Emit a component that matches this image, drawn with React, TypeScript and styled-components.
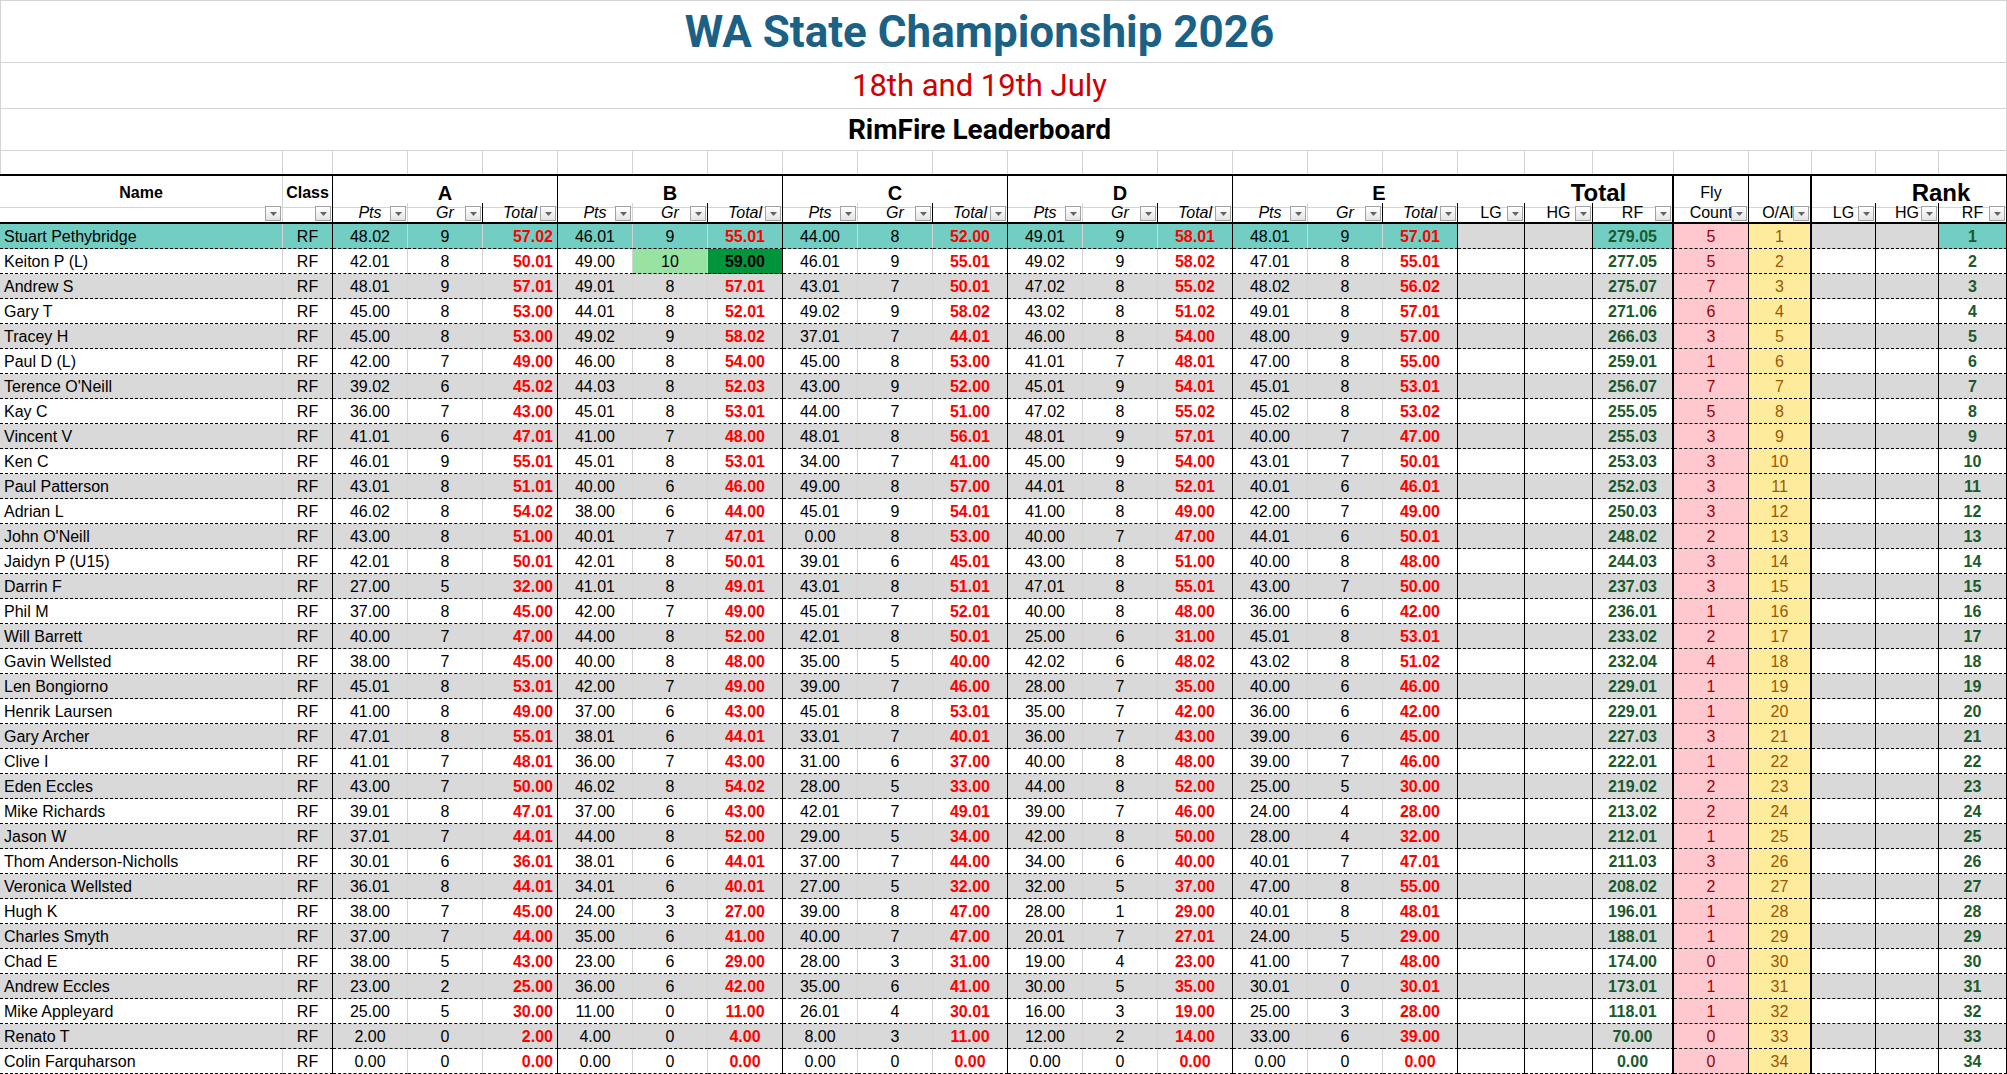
import React from 'react';
import styled, { createGlobalStyle } from 'styled-components';

type Line = 'g' | 'b' | 't' | 'n';
type Align = 'left' | 'center' | 'right';

const GRID = '#d4d4d4';
const TEAL = '#72cdc2';
const STRIPE = '#d9d9d9';
const WHITE = '#ffffff';
const PINK = '#ffc7ce';
const YELLOW = '#ffeb9c';
const RED = '#ff0000';
const GREEN_TEXT = '#1b5a2c';

const LINES: Record<Line, string> = {
	g: `1px solid ${GRID}`,
	b: '1px solid #000',
	t: '2px solid #000',
	n: '0 none',
};

interface Col {
	w: number;
	data: Line;
	filter: Line;
	label: string;
	italic?: boolean;
}

const stageCols = (): Col[] => [
	{ w: 75, data: 'g', filter: 'g', label: 'Pts', italic: true },
	{ w: 75, data: 'g', filter: 'b', label: 'Gr', italic: true },
	{ w: 75, data: 'b', filter: 'b', label: 'Total', italic: true },
];

const COLUMNS: Col[] = [
	{ w: 283, data: 'g', filter: 'g', label: '' },
	{ w: 50, data: 'b', filter: 'b', label: '' },
	...stageCols(),
	...stageCols(),
	...stageCols(),
	...stageCols(),
	...stageCols(),
	{ w: 67, data: 'b', filter: 'b', label: 'LG' },
	{ w: 68, data: 'b', filter: 'b', label: 'HG' },
	{ w: 81, data: 't', filter: 't', label: 'RF' },
	{ w: 75, data: 'b', filter: 'b', label: 'Count' },
	{ w: 63, data: 't', filter: 't', label: 'O/All' },
	{ w: 64, data: 'b', filter: 'b', label: 'LG' },
	{ w: 63, data: 'b', filter: 'b', label: 'HG' },
	{ w: 68, data: 'b', filter: 'b', label: 'RF' },
];

const TEMPLATE = COLUMNS.map((c) => `${c.w}px`).join(' ');

// name | A | B | C | D | E | total | fly count  (rank = position)
const RESULTS = [
	'Stuart Pethybridge|48.02 9 57.02|46.01 9 55.01|44.00 8 52.00|49.01 9 58.01|48.01 9 57.01|279.05|5',
	'Keiton P (L)|42.01 8 50.01|49.00 10 59.00|46.01 9 55.01|49.02 9 58.02|47.01 8 55.01|277.05|5',
	'Andrew S|48.01 9 57.01|49.01 8 57.01|43.01 7 50.01|47.02 8 55.02|48.02 8 56.02|275.07|7',
	'Gary T|45.00 8 53.00|44.01 8 52.01|49.02 9 58.02|43.02 8 51.02|49.01 8 57.01|271.06|6',
	'Tracey H|45.00 8 53.00|49.02 9 58.02|37.01 7 44.01|46.00 8 54.00|48.00 9 57.00|266.03|3',
	'Paul D (L)|42.00 7 49.00|46.00 8 54.00|45.00 8 53.00|41.01 7 48.01|47.00 8 55.00|259.01|1',
	"Terence O'Neill|39.02 6 45.02|44.03 8 52.03|43.00 9 52.00|45.01 9 54.01|45.01 8 53.01|256.07|7",
	'Kay C|36.00 7 43.00|45.01 8 53.01|44.00 7 51.00|47.02 8 55.02|45.02 8 53.02|255.05|5',
	'Vincent V|41.01 6 47.01|41.00 7 48.00|48.01 8 56.01|48.01 9 57.01|40.00 7 47.00|255.03|3',
	'Ken C|46.01 9 55.01|45.01 8 53.01|34.00 7 41.00|45.00 9 54.00|43.01 7 50.01|253.03|3',
	'Paul Patterson|43.01 8 51.01|40.00 6 46.00|49.00 8 57.00|44.01 8 52.01|40.01 6 46.01|252.03|3',
	'Adrian L|46.02 8 54.02|38.00 6 44.00|45.01 9 54.01|41.00 8 49.00|42.00 7 49.00|250.03|3',
	"John O'Neill|43.00 8 51.00|40.01 7 47.01|0.00 8 53.00|40.00 7 47.00|44.01 6 50.01|248.02|2",
	'Jaidyn P (U15)|42.01 8 50.01|42.01 8 50.01|39.01 6 45.01|43.00 8 51.00|40.00 8 48.00|244.03|3',
	'Darrin F|27.00 5 32.00|41.01 8 49.01|43.01 8 51.01|47.01 8 55.01|43.00 7 50.00|237.03|3',
	'Phil M|37.00 8 45.00|42.00 7 49.00|45.01 7 52.01|40.00 8 48.00|36.00 6 42.00|236.01|1',
	'Will Barrett|40.00 7 47.00|44.00 8 52.00|42.01 8 50.01|25.00 6 31.00|45.01 8 53.01|233.02|2',
	'Gavin Wellsted|38.00 7 45.00|40.00 8 48.00|35.00 5 40.00|42.02 6 48.02|43.02 8 51.02|232.04|4',
	'Len Bongiorno|45.01 8 53.01|42.00 7 49.00|39.00 7 46.00|28.00 7 35.00|40.00 6 46.00|229.01|1',
	'Henrik Laursen|41.00 8 49.00|37.00 6 43.00|45.01 8 53.01|35.00 7 42.00|36.00 6 42.00|229.01|1',
	'Gary Archer|47.01 8 55.01|38.01 6 44.01|33.01 7 40.01|36.00 7 43.00|39.00 6 45.00|227.03|3',
	'Clive I|41.01 7 48.01|36.00 7 43.00|31.00 6 37.00|40.00 8 48.00|39.00 7 46.00|222.01|1',
	'Eden Eccles|43.00 7 50.00|46.02 8 54.02|28.00 5 33.00|44.00 8 52.00|25.00 5 30.00|219.02|2',
	'Mike Richards|39.01 8 47.01|37.00 6 43.00|42.01 7 49.01|39.00 7 46.00|24.00 4 28.00|213.02|2',
	'Jason W|37.01 7 44.01|44.00 8 52.00|29.00 5 34.00|42.00 8 50.00|28.00 4 32.00|212.01|1',
	'Thom Anderson-Nicholls|30.01 6 36.01|38.01 6 44.01|37.00 7 44.00|34.00 6 40.00|40.01 7 47.01|211.03|3',
	'Veronica Wellsted|36.01 8 44.01|34.01 6 40.01|27.00 5 32.00|32.00 5 37.00|47.00 8 55.00|208.02|2',
	'Hugh K|38.00 7 45.00|24.00 3 27.00|39.00 8 47.00|28.00 1 29.00|40.01 8 48.01|196.01|1',
	'Charles Smyth|37.00 7 44.00|35.00 6 41.00|40.00 7 47.00|20.01 7 27.01|24.00 5 29.00|188.01|1',
	'Chad E|38.00 5 43.00|23.00 6 29.00|28.00 3 31.00|19.00 4 23.00|41.00 7 48.00|174.00|0',
	'Andrew Eccles|23.00 2 25.00|36.00 6 42.00|35.00 6 41.00|30.00 5 35.00|30.01 0 30.01|173.01|1',
	'Mike Appleyard|25.00 5 30.00|11.00 0 11.00|26.01 4 30.01|16.00 3 19.00|25.00 3 28.00|118.01|1',
	'Renato T|2.00 0 2.00|4.00 0 4.00|8.00 3 11.00|12.00 2 14.00|33.00 6 39.00|70.00|0',
	'Colin Farquharson|0.00 0 0.00|0.00 0 0.00|0.00 0 0.00|0.00 0 0.00|0.00 0 0.00|0.00|0',
];

const GlobalStyle = createGlobalStyle`
	html, body {
		margin: 0;
		padding: 0;
		background: #fff;
		overflow: hidden;
	}

	body {
		font-family: 'Liberation Sans', Arial, sans-serif;
		color: #000;
	}

	* {
		box-sizing: border-box;
	}
`;

const Sheet = styled.main`
	width: 2007px;
`;

const Banner = styled.header`
	display: flex;
	flex-direction: column;
	border-top: 1px solid ${GRID};
`;

const BannerRow = styled.div<{ $h: number }>`
	height: ${(p) => p.$h}px;
	display: flex;
	align-items: center;
	justify-content: center;
	padding-right: 48px;
	border-left: 1px solid ${GRID};
	border-right: 1px solid ${GRID};
	border-bottom: 1px solid ${GRID};
	font-family: Roboto, 'Liberation Sans', sans-serif;
	white-space: nowrap;
`;

const Title = styled.h1`
	margin: 0;
	font-size: 44px;
	font-weight: 700;
	color: #1b6185;
`;

const Dates = styled.div`
	font-size: 31px;
	color: #d00000;
`;

const Subtitle = styled.h2`
	margin: 0;
	font-size: 28px;
	font-weight: 700;
`;

const GridRow = styled.div<{ $h: number }>`
	display: grid;
	grid-template-columns: ${TEMPLATE};
	height: ${(p) => p.$h}px;
`;

const BlankCell = styled.div`
	border-right: 1px solid ${GRID};

	&:first-child {
		border-left: 1px solid ${GRID};
	}
`;

const HeadBlock = styled.div`
	border-top: 2px solid #000;
	border-bottom: 2px solid #000;
`;

const HeadCell = styled.div<{ $span: number; $line: Line; $size: number; $bold: boolean }>`
	grid-column: span ${(p) => p.$span};
	display: flex;
	align-items: center;
	justify-content: center;
	padding-top: 3px;
	border-right: ${(p) => LINES[p.$line]};
	border-bottom: 1px solid ${GRID};
	font-size: ${(p) => p.$size}px;
	font-weight: ${(p) => (p.$bold ? 700 : 400)};
`;

const FilterCell = styled.div<{ $line: Line; $italic: boolean }>`
	position: relative;
	display: flex;
	align-items: center;
	justify-content: center;
	padding-top: 1px;
	border-right: ${(p) => LINES[p.$line]};
	font-size: 16px;
	font-style: ${(p) => (p.$italic ? 'italic' : 'normal')};
	white-space: nowrap;
	overflow: hidden;
`;

const FilterButton = styled.span`
	position: absolute;
	right: 1px;
	top: 3px;
	width: 16px;
	height: 15px;
	display: flex;
	align-items: center;
	justify-content: center;
	border: 1px solid #a3a3a3;
	background: linear-gradient(#ffffff, #e4e4e4);
`;

const DataCell = styled.div<{ $line: Line; $bg: string; $color: string; $bold: boolean; $align: Align }>`
	display: flex;
	align-items: center;
	justify-content: ${(p) => (p.$align === 'left' ? 'flex-start' : p.$align === 'right' ? 'flex-end' : 'center')};
	padding: 2px 4px 0;
	background: ${(p) => p.$bg};
	color: ${(p) => p.$color};
	font-size: 16px;
	font-weight: ${(p) => (p.$bold ? 700 : 400)};
	border-right: ${(p) => LINES[p.$line]};
	border-bottom: 1px dashed #000;
	white-space: nowrap;
	overflow: hidden;
`;

const Caret = () => (
	<svg width="7" height="4" viewBox="0 0 7 4">
		<polygon points="0,0 7,0 3.5,4" fill="#666" />
	</svg>
);

interface HeadSpec {
	text: string;
	span: number;
	line: Line;
	size: number;
	bold: boolean;
}

const HEADINGS: HeadSpec[] = [
	{ text: 'Name', span: 1, line: 'g', size: 16, bold: true },
	{ text: 'Class', span: 1, line: 'b', size: 16, bold: true },
	{ text: 'A', span: 3, line: 'b', size: 20, bold: true },
	{ text: 'B', span: 3, line: 'b', size: 20, bold: true },
	{ text: 'C', span: 3, line: 'b', size: 20, bold: true },
	{ text: 'D', span: 3, line: 'b', size: 20, bold: true },
	{ text: 'E', span: 4, line: 'n', size: 20, bold: true },
	{ text: 'Total', span: 2, line: 't', size: 24, bold: true },
	{ text: 'Fly', span: 1, line: 'b', size: 16, bold: false },
	{ text: '', span: 1, line: 't', size: 16, bold: false },
	{ text: '', span: 1, line: 'n', size: 16, bold: false },
	{ text: 'Rank', span: 2, line: 'b', size: 24, bold: true },
];

interface CellSpec {
	text: string;
	bg: string;
	color?: string;
	bold?: boolean;
	align?: Align;
}

const buildRow = (line: string, i: number): CellSpec[] => {
	const [name, ...rest] = line.split('|');
	const stages = rest.slice(0, 5).map((s) => s.split(' '));
	const [total, fly] = rest.slice(5);
	const stripe = i === 0 ? TEAL : i % 2 ? WHITE : STRIPE;
	const muted = i === 0 ? STRIPE : stripe;

	const cells: CellSpec[] = [
		{ text: name, bg: stripe, align: 'left' },
		{ text: 'RF', bg: stripe },
	];

	stages.forEach(([pts, gr, tot], s) => {
		// Keiton's B stage carries a conditional highlight
		const hot = i === 1 && s === 1;
		cells.push({ text: pts, bg: stripe });
		cells.push({ text: gr, bg: hot ? '#98e3a2' : stripe });
		cells.push({
			text: tot,
			bg: hot ? '#00953b' : stripe,
			color: hot ? '#000' : RED,
			bold: true,
			align: s === 0 ? 'right' : 'center',
		});
	});

	cells.push(
		{ text: '', bg: muted },
		{ text: '', bg: muted },
		{ text: total, bg: stripe, color: GREEN_TEXT, bold: true },
		{ text: fly, bg: PINK, color: '#9c0006' },
		{ text: String(i + 1), bg: YELLOW, color: '#9c5700' },
		{ text: '', bg: muted },
		{ text: '', bg: muted },
		{ text: String(i + 1), bg: stripe, color: GREEN_TEXT, bold: true },
	);

	return cells;
};

export default function App() {
	return (
		<Sheet>
			<GlobalStyle />
			<Banner>
				<BannerRow $h={62}>
					<Title>WA State Championship 2026</Title>
				</BannerRow>
				<BannerRow $h={46}>
					<Dates>18th and 19th July</Dates>
				</BannerRow>
				<BannerRow $h={42}>
					<Subtitle>RimFire Leaderboard</Subtitle>
				</BannerRow>
			</Banner>

			<GridRow $h={23}>
				{COLUMNS.map((_, c) => (
					<BlankCell key={c} />
				))}
			</GridRow>

			<HeadBlock>
				<GridRow $h={27}>
					{HEADINGS.map((h, k) => (
						<HeadCell key={k} $span={h.span} $line={h.line} $size={h.size} $bold={h.bold}>
							{h.text}
						</HeadCell>
					))}
				</GridRow>
				<GridRow $h={19}>
					{COLUMNS.map((c, k) => (
						<FilterCell key={k} $line={c.filter} $italic={!!c.italic}>
							{c.label}
							<FilterButton>
								<Caret />
							</FilterButton>
						</FilterCell>
					))}
				</GridRow>
			</HeadBlock>

			{RESULTS.map((r, i) => (
				<GridRow $h={25} key={i}>
					{buildRow(r, i).map((cell, c) => (
						<DataCell
							key={c}
							$line={COLUMNS[c].data}
							$bg={cell.bg}
							$color={cell.color ?? '#000'}
							$bold={!!cell.bold}
							$align={cell.align ?? 'center'}
						>
							{cell.text}
						</DataCell>
					))}
				</GridRow>
			))}
		</Sheet>
	);
}
